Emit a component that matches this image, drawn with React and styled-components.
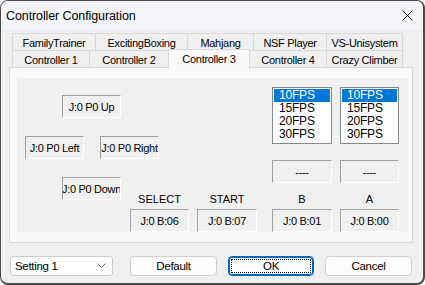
import React from "react";
import styled, { createGlobalStyle } from "styled-components";

const Global = createGlobalStyle`
  html, body { margin: 0; padding: 0; background: #ffffff; }
  * { box-sizing: border-box; }
`;

const Window = styled.div`
  width: 425px;
  height: 285px;
  border: 1px solid #4a4a4a;
  border-right-width: 2px;
  border-bottom-width: 2px;
  border-radius: 8px;
  overflow: hidden;
  background: #f0f0f0;
  display: flex;
  flex-direction: column;
  font-family: "Liberation Sans", Arial, sans-serif;
  font-size: 11px;
  letter-spacing: -0.3px;
  color: #000;
`;

const TitleBar = styled.div`
  height: 29px;
  flex: none;
  display: flex;
  align-items: center;
  justify-content: space-between;
  padding: 0 10px 0 5px;
  background: #f3f5f8;
`;

const Title = styled.div`
  font-family: "Liberation Sans", Arial, sans-serif;
  font-size: 12.5px;
  letter-spacing: -0.1px;
`;

const Body = styled.div`
  flex: 1;
  display: flex;
  flex-direction: column;
  padding: 3px 0 0 8px;
`;

const TabRow = styled.div`
  display: flex;
  height: 17px;
  margin-left: 3px;
  align-items: flex-end;
  position: relative;
  z-index: ${(p) => (p.$front ? 2 : 1)};
`;

const Tab = styled.div`
  width: ${(p) => p.$w}px;
  height: ${(p) => (p.$active ? 20 : 17)}px;
  margin-right: -1px;
  margin-bottom: ${(p) => (p.$active ? -2 : 0)}px;
  border: 1px solid #d9d9d9;
  border-bottom: none;
  background: ${(p) => (p.$active ? "#f9f9f9" : "#f0f0f0")};
  display: flex;
  align-items: ${(p) => (p.$active ? "flex-start" : "center")};
  padding-top: ${(p) => (p.$active ? 3 : 1)}px;
  justify-content: center;
  position: relative;
  z-index: ${(p) => (p.$active ? 3 : 1)};
  white-space: nowrap;
`;

const Panel = styled.div`
  width: 404px;
  height: 176px;
  border: 1px solid #d9d9d9;
  background: #f9f9f9;
  padding: 10px 4px 10px 7px;
  position: relative;
  z-index: 1;
`;

const Inner = styled.div`
  width: 391px;
  height: 154px;
  background: #f0f0f0;
  display: grid;
  grid-template-columns: 8px 37px 22px 16px 21px 9px 29px 30px 8px 60px 15px 60px 8px 59px;
  grid-template-rows: 9px 8px 23px 18px 8px 15px 1px 17px 6px 26px 23px;
`;

const Static = styled.div`
  grid-column: ${(p) => p.$col};
  grid-row: ${(p) => p.$row};
  height: 23px;
  align-self: start;
  border-top: 1px solid #a0a0a0;
  border-left: 1px solid #a0a0a0;
  border-right: 1px solid #ffffff;
  border-bottom: 1px solid #ffffff;
  display: flex;
  align-items: center;
  justify-content: center;
  overflow: hidden;
  white-space: nowrap;
`;

const Label = styled.div`
  grid-column: ${(p) => p.$col};
  grid-row: ${(p) => p.$row};
  align-self: end;
  margin-bottom: 3px;
  text-align: center;
  line-height: 13px;
  letter-spacing: 0;
`;

const ListBox = styled.div`
  grid-column: ${(p) => p.$col};
  grid-row: 2 / 6;
  height: 57px;
  border: 1px solid #828790;
  background: #ffffff;
  padding: 1px;
  display: flex;
  flex-direction: column;
`;

const ListItem = styled.div`
  height: 13px;
  line-height: 13px;
  padding-left: 5px;
  background: ${(p) => (p.$sel ? "#0078d7" : "transparent")};
  color: ${(p) => (p.$sel ? "#ffffff" : "#000000")};
  font-size: 12px;
  letter-spacing: -0.2px;
`;

const BottomRow = styled.div`
  display: flex;
  align-items: center;
  margin-top: 13px;
  padding-left: 1px;
  height: 20px;
`;

const Combo = styled.div`
  width: 103px;
  height: 20px;
  background: #ffffff;
  border: 1px solid #cccccc;
  border-radius: 3px;
  display: flex;
  align-items: center;
  justify-content: space-between;
  padding: 0 6px 0 4px;
  font-size: 11.5px;
  margin-right: 17px;
`;

const Button = styled.div`
  width: ${(p) => p.$w}px;
  height: 20px;
  margin-right: 11px;
  background: #fdfdfd;
  border: 1px solid ${(p) => (p.$default ? "#0067c0" : "#d0d0d0")};
  box-shadow: ${(p) => (p.$default ? "inset 0 0 0 1px #0067c0" : "none")};
  border-radius: 4px;
  display: flex;
  align-items: center;
  justify-content: center;
  padding: 2px;
  font-size: 11.5px;
`;

const Focus = styled.div`
  width: 100%;
  height: 100%;
  border: 1px dotted #000;
  display: flex;
  align-items: center;
  justify-content: center;
`;

const row1 = [
  ["FamilyTrainer", 84],
  ["ExcitingBoxing", 93],
  ["Mahjang", 67],
  ["NSF Player", 74],
  ["VS-Unisystem", 77],
];
const row2 = [
  ["Controller 1", 78],
  ["Controller 2", 80],
  ["Controller 3", 82, true],
  ["Controller 4", 78],
  ["Crazy Climber", 77],
];

const fps = ["10FPS", "15FPS", "20FPS", "30FPS"];

export default function App() {
  return (
    <>
      <Global />
      <Window>
        <TitleBar>
          <Title>Controller Configuration</Title>
          <svg width="11" height="11" viewBox="0 0 11 11">
            <path d="M0.5 0.5 L10.5 10.5 M10.5 0.5 L0.5 10.5" stroke="#000" strokeWidth="1" />
          </svg>
        </TitleBar>
        <Body>
          <TabRow>
            {row1.map(([t, w]) => (
              <Tab key={t} $w={w}>{t}</Tab>
            ))}
          </TabRow>
          <TabRow $front>
            {row2.map(([t, w, a]) => (
              <Tab key={t} $w={w} $active={a}>{t}</Tab>
            ))}
          </TabRow>
          <Panel>
            <Inner>
              <Static $col="3 / 6" $row="3 / 4">J:0 P0 Up</Static>
              <Static $col="2 / 4" $row="5 / 7">J:0 P0 Left</Static>
              <Static $col="5 / 8" $row="5 / 7">J:0 P0 Right</Static>
              <Static $col="3 / 6" $row="9 / 11">J:0 P0 Down</Static>

              <ListBox $col="12 / 13">
                {fps.map((f, i) => (
                  <ListItem key={f} $sel={i === 0}>{f}</ListItem>
                ))}
              </ListBox>
              <ListBox $col="14 / 15">
                {fps.map((f, i) => (
                  <ListItem key={f} $sel={i === 0}>{f}</ListItem>
                ))}
              </ListBox>
              <Static $col="12 / 13" $row="8 / 10">----</Static>
              <Static $col="14 / 15" $row="8 / 10">----</Static>

              <Label $col="7 / 9" $row="10 / 11">SELECT</Label>
              <Label $col="10 / 11" $row="10 / 11">START</Label>
              <Label $col="12 / 13" $row="10 / 11">B</Label>
              <Label $col="14 / 15" $row="10 / 11">A</Label>

              <Static $col="7 / 9" $row="11 / 12">J:0 B:06</Static>
              <Static $col="10 / 11" $row="11 / 12">J:0 B:07</Static>
              <Static $col="12 / 13" $row="11 / 12">J:0 B:01</Static>
              <Static $col="14 / 15" $row="11 / 12">J:0 B:00</Static>
            </Inner>
          </Panel>
          <BottomRow>
            <Combo>
              <span>Setting 1</span>
              <svg width="9" height="6" viewBox="0 0 9 6">
                <path d="M0.5 0.5 L4.5 4.5 L8.5 0.5" stroke="#666" strokeWidth="1" fill="none" />
              </svg>
            </Combo>
            <Button $w={87}>Default</Button>
            <Button $w={86} $default>
              <Focus>OK</Focus>
            </Button>
            <Button $w={87}>Cancel</Button>
          </BottomRow>
        </Body>
      </Window>
    </>
  );
}
